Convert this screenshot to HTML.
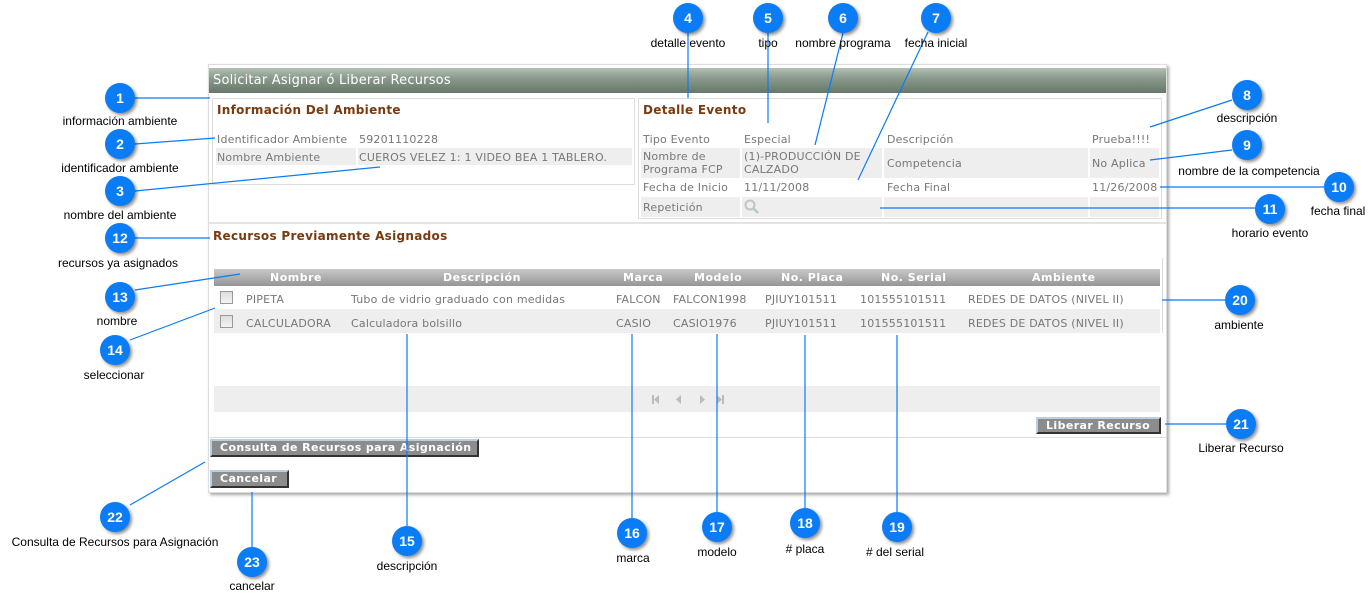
<!DOCTYPE html>
<html><head><meta charset="utf-8">
<style>
*{margin:0;padding:0;box-sizing:border-box}
body{width:1370px;height:596px;background:#fff;position:relative;overflow:hidden;font-family:"DejaVu Sans","Liberation Sans",sans-serif;font-size:11px;letter-spacing:0.2px;color:#777}
.a{position:absolute;white-space:nowrap}
.b{position:absolute;width:30px;height:30px;border-radius:50%;background:#0a7cf5;color:#fff;font:bold 14px "Liberation Sans",sans-serif;letter-spacing:0;text-align:center;line-height:30px;box-shadow:2px 2px 3px rgba(0,0,0,.45)}
.l{position:absolute;font:12px "Liberation Sans",sans-serif;letter-spacing:0;color:#000;white-space:nowrap;transform:translateX(-50%)}
.g{background:#eee}
.h{color:#7a3a10;font-weight:bold;font-size:12px;letter-spacing:0.3px}
.th{color:#fff;font-weight:bold;font-size:11px;letter-spacing:0.5px}
.btn{position:absolute;white-space:nowrap;overflow:hidden;background:#8c8c8c;color:#fff;font-weight:bold;font-size:11px;letter-spacing:0.4px;border-top:2px solid #b8d0e0;border-left:2px solid #b8d0e0;border-right:2px solid #333;border-bottom:2px solid #333;padding-left:8px;line-height:14px}
</style></head><body>
<div class="a" style="left:208px;top:64px;width:959px;height:429px;border:1px solid #ddd;box-shadow:2px 2px 3px rgba(0,0,0,.35);background:#fff"></div>
<div class="a" style="left:209px;top:68px;width:957px;height:25px;background:linear-gradient(#b4c0b4,#8a9a8c 40%,#65786a);color:#fff;font-size:13px;line-height:26px;padding-left:4px">Solicitar Asignar ó Liberar Recursos</div>
<div class="a" style="left:212px;top:98px;width:423px;height:87px;border:1px solid #ddd"></div>
<div class="a h" style="left:217px;top:103px">Información Del Ambiente</div>
<div class="a" style="left:217px;top:133px">Identificador Ambiente</div>
<div class="a" style="left:359px;top:133px">59201110228</div>
<div class="a g" style="left:216px;top:148px;width:140px;height:17px"></div>
<div class="a g" style="left:358px;top:148px;width:274px;height:17px"></div>
<div class="a" style="left:217px;top:151px">Nombre Ambiente</div>
<div class="a" style="left:359px;top:151px">CUEROS VELEZ 1: 1 VIDEO BEA 1 TABLERO.</div>
<div class="a" style="left:638px;top:98px;width:524px;height:121px;border:1px solid #ddd"></div>
<div class="a h" style="left:643px;top:103px">Detalle Evento</div>
<div class="a" style="left:643px;top:133px">Tipo Evento</div>
<div class="a" style="left:744px;top:133px">Especial</div>
<div class="a" style="left:887px;top:133px">Descripción</div>
<div class="a" style="left:1092px;top:133px">Prueba!!!!</div>
<div class="a g" style="left:641px;top:148px;width:99px;height:30px"></div>
<div class="a g" style="left:742px;top:148px;width:140px;height:30px"></div>
<div class="a g" style="left:884px;top:148px;width:204px;height:30px"></div>
<div class="a g" style="left:1090px;top:148px;width:69px;height:30px"></div>
<div class="a" style="left:643px;top:150px;line-height:13px">Nombre de<br>Programa FCP</div>
<div class="a" style="left:744px;top:150px;line-height:13px">(1)-PRODUCCIÓN DE<br>CALZADO</div>
<div class="a" style="left:887px;top:157px">Competencia</div>
<div class="a" style="left:1092px;top:157px">No Aplica</div>
<div class="a" style="left:643px;top:181px">Fecha de Inicio</div>
<div class="a" style="left:744px;top:181px">11/11/2008</div>
<div class="a" style="left:887px;top:181px">Fecha Final</div>
<div class="a" style="left:1092px;top:181px">11/26/2008</div>
<div class="a g" style="left:641px;top:197px;width:99px;height:20px"></div>
<div class="a g" style="left:742px;top:197px;width:140px;height:20px"></div>
<div class="a g" style="left:884px;top:197px;width:204px;height:20px"></div>
<div class="a g" style="left:1090px;top:197px;width:69px;height:20px"></div>
<div class="a" style="left:643px;top:201px">Repetición</div>
<svg class="a" style="left:743px;top:198px" width="18" height="18"><circle cx="7" cy="7" r="4.5" fill="none" stroke="#bcc8bc" stroke-width="2"/><line x1="10" y1="10" x2="15" y2="15" stroke="#bcc8bc" stroke-width="2.5"/></svg>
<div class="a" style="left:209px;top:222px;width:957px;height:2px;background:#e4e4e4"></div>
<div class="a h" style="left:213px;top:229px">Recursos Previamente Asignados</div>
<div class="a" style="left:1162px;top:258px;width:1px;height:75px;background:#ddd"></div>
<div class="a" style="left:214px;top:269px;width:946px;height:17px;background:linear-gradient(#c8c8c8,#959595)"></div>
<div class="a th" style="left:270px;top:271px">Nombre</div>
<div class="a th" style="left:443px;top:271px">Descripción</div>
<div class="a th" style="left:623px;top:271px">Marca</div>
<div class="a th" style="left:694px;top:271px">Modelo</div>
<div class="a th" style="left:781px;top:271px">No. Placa</div>
<div class="a th" style="left:881px;top:271px">No. Serial</div>
<div class="a th" style="left:1032px;top:271px">Ambiente</div>
<div class="a" style="left:214px;top:309px;width:946px;height:1px;background:#eee"></div>
<div class="a g" style="left:214px;top:310px;width:946px;height:23px"></div>
<div class="a" style="left:220px;top:291px;width:13px;height:13px;border:1px solid #999;background:linear-gradient(#ddd,#f4f4f4)"></div>
<div class="a" style="left:220px;top:315px;width:13px;height:13px;border:1px solid #999;background:linear-gradient(#ddd,#f4f4f4)"></div>
<div class="a" style="left:246px;top:293px">PIPETA</div>
<div class="a" style="left:351px;top:293px">Tubo de vidrio graduado con medidas</div>
<div class="a" style="left:616px;top:293px">FALCON</div>
<div class="a" style="left:673px;top:293px">FALCON1998</div>
<div class="a" style="left:765px;top:293px">PJIUY101511</div>
<div class="a" style="left:860px;top:293px">101555101511</div>
<div class="a" style="left:968px;top:293px">REDES DE DATOS (NIVEL II)</div>
<div class="a" style="left:246px;top:317px">CALCULADORA</div>
<div class="a" style="left:351px;top:317px">Calculadora bolsillo</div>
<div class="a" style="left:616px;top:317px">CASIO</div>
<div class="a" style="left:673px;top:317px">CASIO1976</div>
<div class="a" style="left:765px;top:317px">PJIUY101511</div>
<div class="a" style="left:860px;top:317px">101555101511</div>
<div class="a" style="left:968px;top:317px">REDES DE DATOS (NIVEL II)</div>
<div class="a g" style="left:214px;top:386px;width:946px;height:26px"></div>
<svg class="a" style="left:650px;top:394px" width="80" height="12"><g fill="#b4c0b4"><rect x="2" y="1" width="2" height="9"/><polygon points="9,1 4,5.5 9,10"/><polygon points="31,1 26,5.5 31,10"/><polygon points="50,1 55,5.5 50,10"/><polygon points="67,1 72,5.5 67,10"/><rect x="72" y="1" width="2" height="9"/></g></svg>
<div class="btn" style="left:1036px;top:417px;width:125px;height:17px">Liberar Recurso</div>
<div class="a" style="left:209px;top:437px;width:957px;height:1px;background:#ddd"></div>
<div class="btn" style="left:210px;top:439px;width:269px;height:18px">Consulta de Recursos para Asignación</div>
<div class="btn" style="left:210px;top:470px;width:79px;height:18px">Cancelar</div>
<svg class="a" style="left:0;top:0" width="1370" height="596"><g stroke="#0a7cf5" stroke-width="1.2" fill="none">
<line x1="135" y1="98" x2="210" y2="98"/><line x1="135" y1="144" x2="215" y2="138"/><line x1="135" y1="191" x2="380" y2="167"/>
<line x1="688" y1="33" x2="688" y2="98"/><line x1="768" y1="33" x2="768" y2="123"/><line x1="843" y1="33" x2="815" y2="145"/>
<line x1="928" y1="32" x2="858" y2="180"/><line x1="1232" y1="100" x2="1150" y2="127"/><line x1="1232" y1="150" x2="1150" y2="160"/>
<line x1="1324" y1="187" x2="1160" y2="187"/><line x1="1255" y1="208" x2="880" y2="208"/><line x1="135" y1="238" x2="210" y2="238"/>
<line x1="135" y1="290" x2="240" y2="274"/><line x1="130" y1="340" x2="215" y2="308"/>
<line x1="407" y1="526" x2="407" y2="334"/><line x1="632" y1="518" x2="632" y2="334"/><line x1="717" y1="512" x2="717" y2="334"/>
<line x1="805" y1="508" x2="805" y2="335"/><line x1="897" y1="512" x2="897" y2="335"/>
<line x1="1225" y1="300" x2="1162" y2="300"/><line x1="1226" y1="424" x2="1165" y2="424"/>
<line x1="130" y1="505" x2="205" y2="462"/><line x1="252" y1="547" x2="252" y2="492"/></g></svg>
<div class="b" style="left:105px;top:83px">1</div><div class="l" style="left:120px;top:114px">información ambiente</div>
<div class="b" style="left:105px;top:129px">2</div><div class="l" style="left:120px;top:161px">identificador ambiente</div>
<div class="b" style="left:105px;top:176px">3</div><div class="l" style="left:120px;top:208px">nombre del ambiente</div>
<div class="b" style="left:673px;top:3px">4</div><div class="l" style="left:688px;top:36px">detalle evento</div>
<div class="b" style="left:753px;top:3px">5</div><div class="l" style="left:768px;top:36px">tipo</div>
<div class="b" style="left:828px;top:3px">6</div><div class="l" style="left:843px;top:36px">nombre programa</div>
<div class="b" style="left:921px;top:3px">7</div><div class="l" style="left:936px;top:36px">fecha inicial</div>
<div class="b" style="left:1232px;top:80px">8</div><div class="l" style="left:1247px;top:111px">descripción</div>
<div class="b" style="left:1232px;top:130px">9</div><div class="l" style="left:1249px;top:164px">nombre de la competencia</div>
<div class="b" style="left:1324px;top:172px">10</div><div class="l" style="left:1338px;top:204px">fecha final</div>
<div class="b" style="left:1255px;top:194px">11</div><div class="l" style="left:1270px;top:226px">horario evento</div>
<div class="b" style="left:105px;top:223px">12</div><div class="l" style="left:118px;top:256px">recursos ya asignados</div>
<div class="b" style="left:105px;top:282px">13</div><div class="l" style="left:117px;top:314px">nombre</div>
<div class="b" style="left:100px;top:335px">14</div><div class="l" style="left:114px;top:368px">seleccionar</div>
<div class="b" style="left:392px;top:526px">15</div><div class="l" style="left:407px;top:559px">descripción</div>
<div class="b" style="left:617px;top:518px">16</div><div class="l" style="left:633px;top:551px">marca</div>
<div class="b" style="left:702px;top:512px">17</div><div class="l" style="left:717px;top:545px">modelo</div>
<div class="b" style="left:790px;top:508px">18</div><div class="l" style="left:805px;top:542px">#  placa</div>
<div class="b" style="left:882px;top:512px">19</div><div class="l" style="left:895px;top:545px"># del serial</div>
<div class="b" style="left:1225px;top:285px">20</div><div class="l" style="left:1239px;top:318px">ambiente</div>
<div class="b" style="left:1226px;top:409px">21</div><div class="l" style="left:1241px;top:441px">Liberar Recurso</div>
<div class="b" style="left:100px;top:502px">22</div><div class="l" style="left:115px;top:535px">Consulta de Recursos para Asignación</div>
<div class="b" style="left:237px;top:547px">23</div><div class="l" style="left:252px;top:579px">cancelar</div>
</body></html>
